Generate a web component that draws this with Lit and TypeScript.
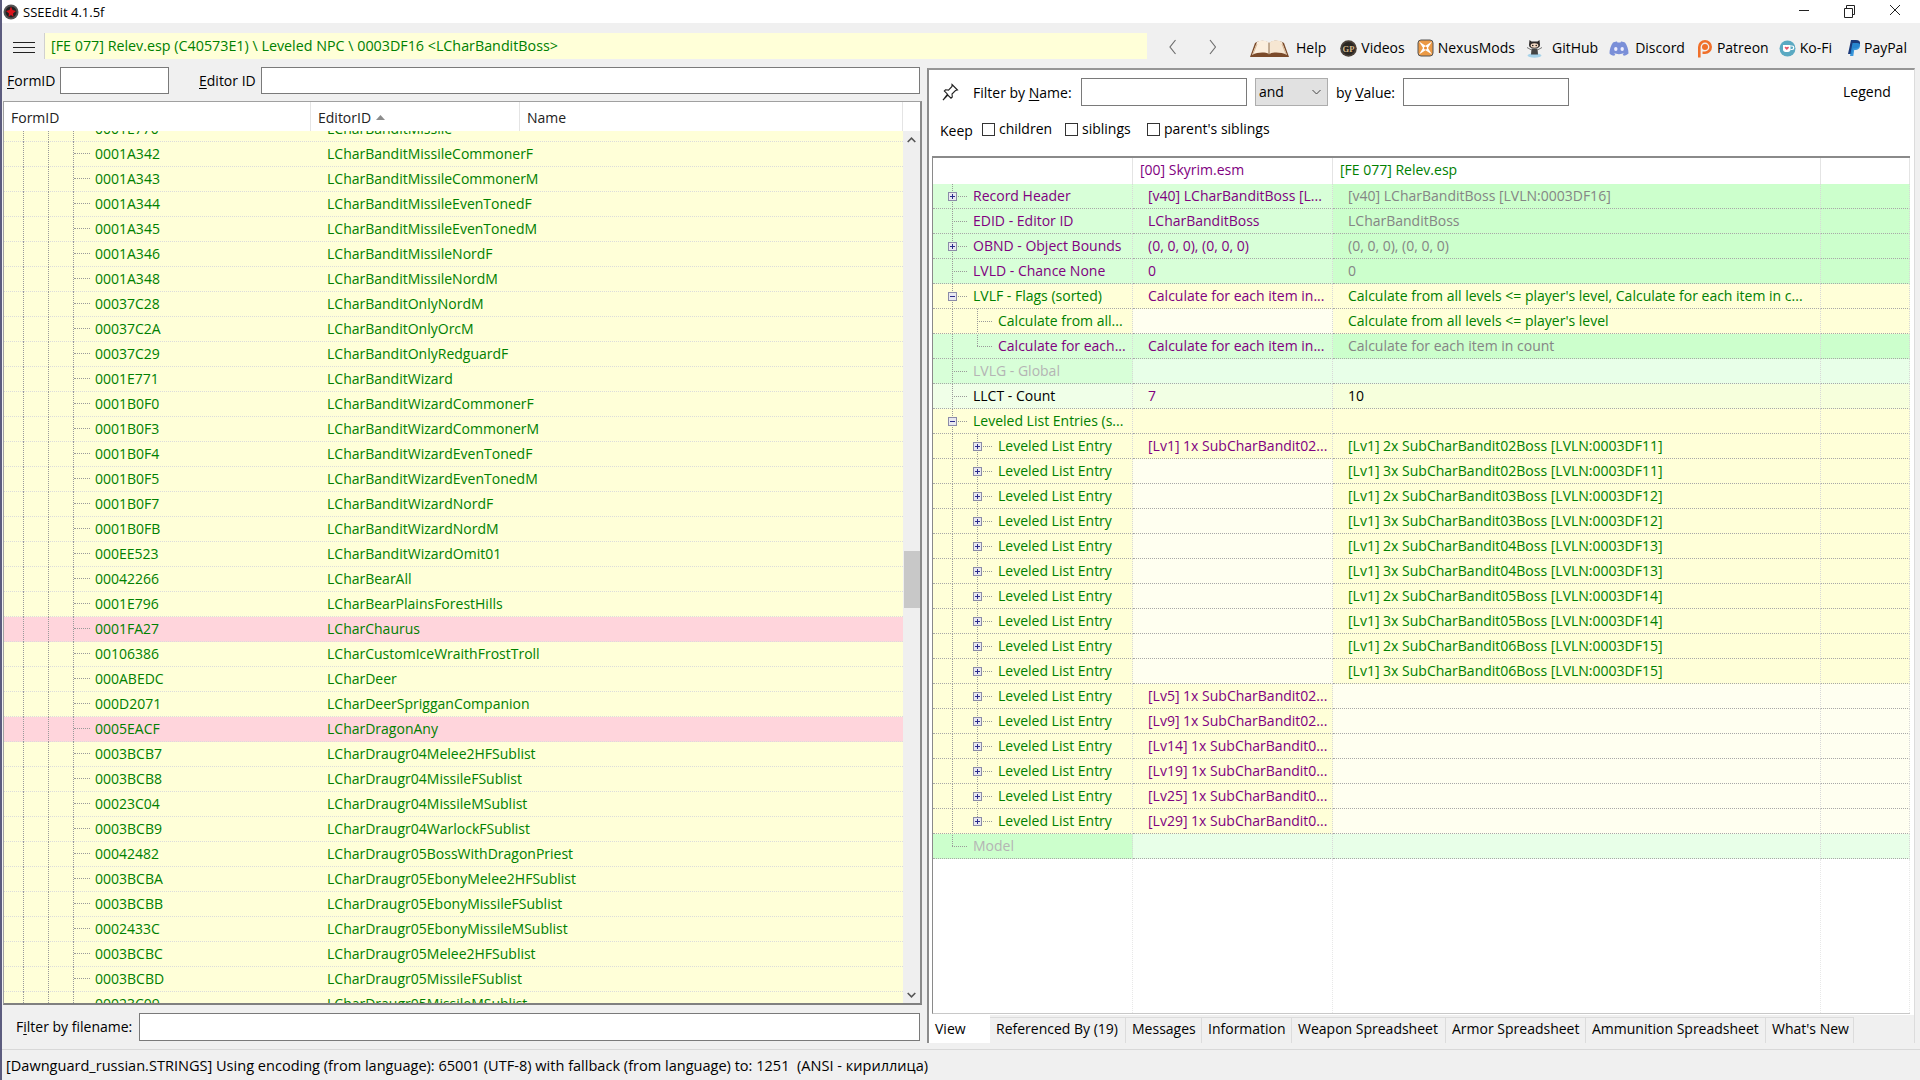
import { LitElement, html, css, svg } from "lit";
import { customElement } from "lit/decorators.js";

const LEFT: [string, string, boolean?][] = [
  ["0001E770", "LCharBanditMissile"],
  ["0001A342", "LCharBanditMissileCommonerF"],
  ["0001A343", "LCharBanditMissileCommonerM"],
  ["0001A344", "LCharBanditMissileEvenTonedF"],
  ["0001A345", "LCharBanditMissileEvenTonedM"],
  ["0001A346", "LCharBanditMissileNordF"],
  ["0001A348", "LCharBanditMissileNordM"],
  ["00037C28", "LCharBanditOnlyNordM"],
  ["00037C2A", "LCharBanditOnlyOrcM"],
  ["00037C29", "LCharBanditOnlyRedguardF"],
  ["0001E771", "LCharBanditWizard"],
  ["0001B0F0", "LCharBanditWizardCommonerF"],
  ["0001B0F3", "LCharBanditWizardCommonerM"],
  ["0001B0F4", "LCharBanditWizardEvenTonedF"],
  ["0001B0F5", "LCharBanditWizardEvenTonedM"],
  ["0001B0F7", "LCharBanditWizardNordF"],
  ["0001B0FB", "LCharBanditWizardNordM"],
  ["000EE523", "LCharBanditWizardOmit01"],
  ["00042266", "LCharBearAll"],
  ["0001E796", "LCharBearPlainsForestHills"],
  ["0001FA27", "LCharChaurus", true],
  ["00106386", "LCharCustomIceWraithFrostTroll"],
  ["000ABEDC", "LCharDeer"],
  ["000D2071", "LCharDeerSprigganCompanion"],
  ["0005EACF", "LCharDragonAny", true],
  ["0003BCB7", "LCharDraugr04Melee2HFSublist"],
  ["0003BCB8", "LCharDraugr04MissileFSublist"],
  ["00023C04", "LCharDraugr04MissileMSublist"],
  ["0003BCB9", "LCharDraugr04WarlockFSublist"],
  ["00042482", "LCharDraugr05BossWithDragonPriest"],
  ["0003BCBA", "LCharDraugr05EbonyMelee2HFSublist"],
  ["0003BCBB", "LCharDraugr05EbonyMissileFSublist"],
  ["0002433C", "LCharDraugr05EbonyMissileMSublist"],
  ["0003BCBC", "LCharDraugr05Melee2HFSublist"],
  ["0003BCBD", "LCharDraugr05MissileFSublist"],
  ["00023C09", "LCharDraugr05MissileMSublist"],
];

type Row = {
  name: string; level: number; exp?: "+" | "-"; nc: string; nb: string;
  v1?: string; c1?: string; b1: string; v2?: string; c2?: string; b2: string;
  lastChild?: boolean; lastTop?: boolean;
};

const P = "#800080", G = "#008000", GY = "#858585", LG = "#b4b4b4", K = "#000";
const GR = "#d8ffd8", GR2 = "#ccffcc", GL = "#e8ffe8", Y = "#ffffd8", YL = "#fffff0";

const entries: Row[] = [
  ["[Lv1] 1x SubCharBandit02...", "[Lv1] 2x SubCharBandit02Boss [LVLN:0003DF11]"],
  ["", "[Lv1] 3x SubCharBandit02Boss [LVLN:0003DF11]"],
  ["", "[Lv1] 2x SubCharBandit03Boss [LVLN:0003DF12]"],
  ["", "[Lv1] 3x SubCharBandit03Boss [LVLN:0003DF12]"],
  ["", "[Lv1] 2x SubCharBandit04Boss [LVLN:0003DF13]"],
  ["", "[Lv1] 3x SubCharBandit04Boss [LVLN:0003DF13]"],
  ["", "[Lv1] 2x SubCharBandit05Boss [LVLN:0003DF14]"],
  ["", "[Lv1] 3x SubCharBandit05Boss [LVLN:0003DF14]"],
  ["", "[Lv1] 2x SubCharBandit06Boss [LVLN:0003DF15]"],
  ["", "[Lv1] 3x SubCharBandit06Boss [LVLN:0003DF15]"],
  ["[Lv5] 1x SubCharBandit02...", ""],
  ["[Lv9] 1x SubCharBandit02...", ""],
  ["[Lv14] 1x SubCharBandit0...", ""],
  ["[Lv19] 1x SubCharBandit0...", ""],
  ["[Lv25] 1x SubCharBandit0...", ""],
  ["[Lv29] 1x SubCharBandit0...", ""],
].map(([a, b], i, all) => ({
  name: "Leveled List Entry", level: 1, exp: "+" as const, nc: G, nb: Y,
  v1: a, c1: P, b1: a ? Y : YL, v2: b, c2: G, b2: b ? Y : YL, lastChild: i === all.length - 1,
}));

const ROWS: Row[] = [
  { name: "Record Header", level: 0, exp: "+", nc: P, nb: GR, v1: "[v40] LCharBanditBoss [L...", c1: P, b1: GR, v2: "[v40] LCharBanditBoss [LVLN:0003DF16]", c2: GY, b2: GR2 },
  { name: "EDID - Editor ID", level: 0, nc: P, nb: GR, v1: "LCharBanditBoss", c1: P, b1: GR, v2: "LCharBanditBoss", c2: GY, b2: GR2 },
  { name: "OBND - Object Bounds", level: 0, exp: "+", nc: P, nb: GR, v1: "(0, 0, 0), (0, 0, 0)", c1: P, b1: GR, v2: "(0, 0, 0), (0, 0, 0)", c2: GY, b2: GR2 },
  { name: "LVLD - Chance None", level: 0, nc: P, nb: GR, v1: "0", c1: P, b1: GR, v2: "0", c2: GY, b2: GR2 },
  { name: "LVLF - Flags (sorted)", level: 0, exp: "-", nc: G, nb: Y, v1: "Calculate for each item in...", c1: P, b1: Y, v2: "Calculate from all levels <= player's level, Calculate for each item in c...", c2: G, b2: Y },
  { name: "Calculate from all...", level: 1, nc: G, nb: Y, v1: "", b1: YL, v2: "Calculate from all levels <= player's level", c2: G, b2: Y },
  { name: "Calculate for each...", level: 1, lastChild: true, nc: P, nb: GR, v1: "Calculate for each item in...", c1: P, b1: GR, v2: "Calculate for each item in count", c2: GY, b2: GR2 },
  { name: "LVLG - Global", level: 0, nc: LG, nb: GR, v1: "", b1: GL, v2: "", b2: GL },
  { name: "LLCT - Count", level: 0, nc: K, nb: "#f0ffe8", v1: "7", c1: P, b1: "#f2ffe4", v2: "10", c2: K, b2: "#f6ffdc" },
  { name: "Leveled List Entries (s...", level: 0, exp: "-", nc: G, nb: Y, v1: "", b1: Y, v2: "", b2: Y },
  ...entries,
  { name: "Model", level: 0, lastTop: true, nc: LG, nb: GR2, v1: "", b1: GL, v2: "", b2: GL },
];

@customElement("app-root")
export class AppRoot extends LitElement {
  static styles = css`
    :host { display: block; width: 1920px; height: 1080px; overflow: hidden; background: #f0f0f0; border-left: 2px solid #5c5c7e; box-sizing: border-box;
      font: 14px/18px "Open Sans", "Noto Sans", sans-serif; color: #000; }
    u { text-underline-offset: 2px; }
    .title { height: 23px; background: #fff; display: flex; align-items: center; font-size: 13px; }
    .title .app { margin: 0 4px 0 1px; display: flex; }
    .title .grow { flex: 1; }
    .wc { display: flex; align-items: center; }
    .wc svg { display: block; }
    .toolbar { height: 44px; display: flex; align-items: center; padding-top: 2px; box-sizing: border-box; }
    .burger { width: 22px; height: 11px; margin: 2px 9px 0 11px; border-top: 1px solid #222; border-bottom: 1px solid #222; display: flex; align-items: center; box-sizing: border-box; flex: none; }
    .burger i { display: block; height: 1px; width: 100%; background: #222; }
    .crumb { width: 1103px; height: 26px; box-sizing: border-box; background: #ffffd8; color: #008000; padding: 4px 6px; border-left: 1px solid #d0d0d0; white-space: nowrap; margin-right: 22px; font-size: 14.3px; flex: none; }
    .nav { width: 47px; display: flex; flex: none; margin-top: 1px; }
    .tools { display: flex; align-items: center; margin-top: 4px; }
    .tool { display: flex; align-items: center; white-space: nowrap; }
    .tool svg { display: block; flex: none; }
    .main { display: flex; height: 982px; }
    .left { width: 920px; margin-left: 1px; display: flex; flex-direction: column; }
    .fbar { height: 27px; display: flex; align-items: center; margin-bottom: 7px; }
    input { box-sizing: border-box; border: 1px solid #7a7a7a; background: #fff; display: block; height: 100%; margin: 0; padding: 0; outline: none; }
    .fbar .l1 { width: 57px; padding-left: 4px; box-sizing: border-box; }
    .fbar .i1 { width: 109px; height: 27px; }
    .fbar .l2 { margin-left: 30px; width: 62px; white-space: nowrap; }
    .fbar .i2 { width: 659px; height: 27px; }
    .list { height: 904px; border: 1px solid #8e8e8e; border-width: 1px 2px 2px 1px; border-color: #a0a0a0 #8a8a8a #808080 #a0a0a0; box-sizing: border-box; background: #fff; display: flex; flex-direction: column; width: 919px; }
    .lhead { height: 29px; display: flex; flex: none; color: #222; }
    .lhead div { box-sizing: border-box; border-right: 1px solid #e4e4e4; padding: 7px 0 0 7px; }
    .lbody { flex: 1; display: flex; min-height: 0; }
    .lrows { flex: 1; overflow: hidden; }
    .lscroll { margin-top: -14px; }
    .lrow { height: 25px; box-sizing: border-box; display: flex; background: #ffffd8; color: #008000; border-bottom: 1px dotted #dcdcdc; white-space: nowrap; }
    .lrow.pink { background: #ffd5dc; color: #008000; }
    .lrow .id { width: 307px; display: flex; padding-left: 19px; box-sizing: border-box; }
    .lrow .id i { display: block; width: 25px; box-sizing: border-box; border-left: 1px dotted #9a9a9a; height: 25px; }
    .lrow .id i.h { width: 22px; position: relative; }
    .lrow .id i.h::after { content: ""; position: absolute; left: 0; top: 11px; width: 16px; border-top: 1px dotted #9a9a9a; }
    .lrow .txt { line-height: 24px; }
    .lrow .ed { padding-left: 16px; line-height: 24px; }
    .sb { width: 17px; flex: none; background: #efefef; display: flex; flex-direction: column; align-items: center; }
    .sb .arrow { height: 17px; flex: none; display: flex; align-items: center; justify-content: center; }
    .sb .gap { height: 403px; flex: none; }
    .sb .thumb { height: 57px; width: 16px; background: #c8c8c8; flex: none; }
    .sb .grow { flex: 1; }
    .fname { height: 28px; margin-top: 8px; display: flex; align-items: center; padding-left: 13px; }
    .fname span { width: 123px; flex: none; white-space: nowrap; }
    .fname input { width: 781px; height: 28px; }
    .right { width: 988px; margin: 1px 0 0 4px; border-top: 2px solid #969696; border-left: 2px solid #8c8c8c; background: #fff; height: 975px; box-sizing: border-box; display: flex; flex-direction: column; border-right: 1px solid #dcdcdc; }
    .rf { height: 35px; display: flex; align-items: center; flex: none; margin-top: 4px; }
    .rf svg { margin-left: 12px; }
    .rf .name { margin-left: 14px; width: 108px; white-space: nowrap; padding-top: 2px; }
    .rf input { width: 166px; height: 28px; }
    .select { width: 73px; height: 28px; box-sizing: border-box; margin: 0 8px 0 8px; background: #e1e1e1; border: 1px solid #adadad; display: flex; align-items: center; justify-content: space-between; padding: 0 6px 0 3px; }
    .select svg { margin: 0; }
    .rf .val { width: 67px; white-space: nowrap; padding-top: 2px; }
    .rf .legend { margin-left: 274px; }
    .keep { height: 46px; flex: none; display: flex; align-items: center; padding: 0 0 6px 11px; box-sizing: border-box; margin-top: 1px; }
    .keep .k { width: 42px; padding-top: 2px; }
    .keep .c { display: flex; align-items: center; margin-top: -2px; white-space: nowrap; }
    .cb { width: 13px; height: 13px; border: 1px solid #333; box-sizing: border-box; background: #fff; margin-right: 4px; }
    .tree { margin-left: 3px; width: 978px; flex: 1; min-height: 0; border-top: 2px solid #8a8a8a; border-left: 1px solid #8a8a8a; border-bottom: 1px solid #c8c8c8; display: flex; flex-direction: column; box-sizing: border-box; }
    .thead, .trow, .tfill { display: grid; grid-template-columns: 200px 200px 488px 1fr; flex: none; }
    .thead { height: 26px; }
    .thead div { border-right: 1px solid #e4e4e4; padding: 3px 0 0 7px; white-space: nowrap; }
    .trow { height: 25px; }
    .cell { box-sizing: border-box; height: 25px; border-bottom: 1px dotted #a8a8a8; border-right: 1px dotted #d8d8d8; white-space: nowrap; overflow: hidden; line-height: 24px; padding-left: 15px; }
    .cell.n { display: flex; padding-left: 0; }
    .slot { display: block; flex: none; position: relative; height: 25px; }
    .slot.i0 { width: 25px; }
    .slot.i1 { width: 40px; }
    .vl { position: absolute; left: 19px; top: -1px; height: 26px; border-left: 1px dotted #9a9a9a; }
    .vl.half { height: 13px; }
    .hl { position: absolute; left: 19px; top: 12px; width: 15px; border-top: 1px dotted #9a9a9a; }
    .box { position: absolute; left: 15px; top: 8px; width: 9px; height: 9px; box-sizing: border-box; border: 1px solid #8b8ba8; background: #e9e9f0; display: flex; align-items: center; justify-content: center; }
    .box svg { display: block; }
    .tfill { flex: 1; min-height: 0; }
    .tfill div { border-right: 1px dotted #e8e8e8; }
    .tabs { height: 28px; flex: none; display: flex; background: #f0f0f0; margin-top: 1px; }
    .tab { box-sizing: border-box; height: 26px; margin-top: 2px; padding: 2px 0 0 6px; border-top: 1px solid #dcdcdc; border-right: 1px solid #dcdcdc; white-space: nowrap; }
    .tab.on { background: #fff; height: 28px; margin-top: 0; border: 0; padding: 5px 0 0 6px; }
    .status { height: 31px; border-top: 1px solid #d8d8d8; box-sizing: border-box; padding: 6px 0 0 4px; white-space: nowrap; font-size: 14.55px; }
  `;

  private tool(icon: unknown, label: string, ml: number, gap: number) {
    return html`<div class="tool" style="margin-left:${ml}px"><span style="display:flex;margin-right:${gap}px">${icon}</span>${label}</div>`;
  }

  private box(sign: string) {
    return html`<span class="box"><svg width="7" height="7" viewBox="0 0 7 7"><path d="M1 3.500h5${sign === "+" ? "M3.500 1v5" : ""}" stroke="#2b2b8c" stroke-width="1" fill="none"/></svg></span>`;
  }

  private nameCell(r: Row) {
    return html`<div class="cell n" style="background:${r.nb};color:${r.nc}">
      ${r.level === 1 ? html`<span class="slot i0"><span class="vl"></span></span>` : ""}
      <span class="slot i1">
        <span class="vl ${r.lastTop || r.lastChild ? "half" : ""}"></span><span class="hl"></span>
        ${r.exp ? this.box(r.exp) : ""}
      </span>
      <span>${r.name}</span>
    </div>`;
  }

  render() {
    const icons = {
      book: svg`<svg width="41" height="20" viewBox="0 0 41 20"><path d="M1 19 6 5c5-3 10-3 14 0 4-3 10-3 15 0l5 14z" fill="#7a4a2a"/><path d="M3 17 8 4c4-2 9-2 12 1v11c-4-2-11-2-17 1z" fill="#fbeedd"/><path d="M38 17 33 4c-4-2-10-2-13 1v11c4-2 12-2 18 1z" fill="#f6e6d2"/><path d="M20 5v12" stroke="#8a6a4a"/><path d="M8 6 4 16M33 6l4 10" stroke="#d8b898" fill="none"/></svg>`,
      gp: svg`<svg width="17" height="17" viewBox="0 0 17 17"><circle cx="8.500" cy="8.500" r="8.300" fill="#4a4038"/><circle cx="8.500" cy="8.500" r="6.500" fill="#2a2622"/><text x="8.500" y="11.500" font-size="8.500" font-family="Liberation Serif,serif" font-weight="700" fill="#d4b98a" text-anchor="middle">GP</text></svg>`,
      nexus: svg`<svg width="17" height="18" viewBox="0 0 17 18"><rect x="1" y="1" width="15" height="16" rx="3" fill="#ec9a45" stroke="#555" stroke-width="1"/><path d="M2 2.500 8.500 6.800 15 2.500 11 9 15 15.500 8.500 11.200 2 15.500 6 9z" fill="#fff"/><circle cx="8.500" cy="9" r="1.500" fill="#e9882c"/></svg>`,
      github: svg`<svg width="17" height="20" viewBox="0 0 17 20"><ellipse cx="8.500" cy="17.500" rx="7" ry="2.200" fill="#a7d3ea"/><path d="M3.500 2 5.500 3.500h6L13.500 2 14 7c0 2-2 3.500-5.500 3.500S3 9 3 7z" fill="#2e2a2a"/><ellipse cx="8.500" cy="7.500" rx="3.800" ry="2.200" fill="#f3d9c4"/><circle cx="6.800" cy="7.500" r=".7"/><circle cx="10.200" cy="7.500" r=".7"/><path d="M5.500 10.500h6l.5 6H5z" fill="#444"/><path d="M1 9.500 5.500 12M16 9.500 11.500 12" stroke="#777"/></svg>`,
      discord: svg`<svg width="20" height="15" viewBox="0 0 20 15"><path d="M4 1.500C6 .6 7.500.4 8 .4l.5 1h3l.5-1c.5 0 2 .2 4 1.100 2 2.900 3.600 6.900 3.500 11-1.300 1.100-3 1.900-4.800 2.200l-1-1.700c.8-.3 1.300-.6 1.700-1-3.500 1.500-7.300 1.500-10.800 0 .4.400.9.700 1.700 1l-1 1.700C3.100 14.400 1.300 13.600.5 12.500.400 8.400 2 4.400 4 1.500z" fill="#7a8fd8"/><ellipse cx="6.800" cy="8" rx="1.700" ry="2" fill="#eef"/><ellipse cx="13.200" cy="8" rx="1.700" ry="2" fill="#eef"/></svg>`,
      patreon: svg`<svg width="16" height="19" viewBox="0 0 16 19"><path d="M1 18.500V8a7 7 0 1 1 7 7H5.500v-2.600H8A4.400 4.400 0 1 0 3.600 8v10.500z" fill="#f0702a"/><circle cx="8" cy="8" r="3" fill="#f0702a"/></svg>`,
      kofi: svg`<svg width="17" height="17" viewBox="0 0 17 17"><circle cx="8.500" cy="8.500" r="8" fill="#5aa9c2"/><path d="M4 5h7.500v4.500c0 1.500-1 2.500-2.500 2.500H6.500C5 12 4 11 4 9.500z" fill="#fff"/><path d="M11.500 6h1.500a1.500 1.500 0 0 1 0 3.500h-1.500" fill="none" stroke="#fff" stroke-width="1.200"/><path d="M7.800 10 5.800 8c-.6-1 .9-2 2-.8 1.100-1.200 2.600-.2 2 .8z" fill="#e5566a"/></svg>`,
      paypal: svg`<svg width="14" height="18" viewBox="0 0 14 18"><path d="M4 1h5c3 0 4.500 1.500 4 4-.5 3-2.500 4.500-5.500 4.500H6L5 15H1z" fill="#1b3a7a"/><path d="M5.500 4h4.500c2.500 0 3.500 1.200 3 3.300-.5 2.500-2.300 3.700-4.500 3.700H7.200L6.300 17H3z" fill="#2a8fd8" opacity=".9"/></svg>`,
    };
    const filler = ["", "", "", ""];
    return html`
      <div class="title">
        <span class="app"><svg width="16" height="16" viewBox="0 0 16 16"><circle cx="8" cy="8" r="7.500" fill="#555"/><circle cx="8" cy="8" r="5.500" fill="#222"/><path d="M8 2.500 9.500 6 13 7 10 9.500 10.500 13 8 11 5.500 13 6 9.500 3 7 6.500 6z" fill="#d8141c"/></svg></span>
        <span>SSEEdit 4.1.5f</span><span class="grow"></span>
        <div class="wc">
          <svg width="114" height="23" viewBox="0 0 114 23">
            <path d="M0 10.500H10" stroke="#222" fill="none"/>
            <path d="M45.500 8.500h8v9h-8zM47.500 8.500v-3h8v9h-2" stroke="#222" fill="none"/>
            <path d="M91 5 101 15M101 5 91 15" stroke="#222" fill="none"/>
          </svg><span style="width:7px"></span>
        </div>
      </div>
      <div class="toolbar">
        <div class="burger"><i></i></div>
        <div class="crumb">[FE 077] Relev.esp (C40573E1) \\ Leveled NPC \\ 0003DF16 &lt;LCharBanditBoss&gt;</div>
        <div class="nav">
          <svg width="47" height="18" viewBox="0 0 47 18"><path d="M6.500 2 1 9l5.500 7M41 2l5.500 7-5.500 7" stroke="#6e6e6e" stroke-width="1.200" fill="none"/></svg>
        </div>
        <div class="tools">
          ${this.tool(icons.book, "Help", 33, 6)}
          ${this.tool(icons.gp, "Videos", 14, 4)}
          ${this.tool(icons.nexus, "NexusMods", 12, 4)}
          ${this.tool(icons.github, "GitHub", 11, 9)}
          ${this.tool(icons.discord, "Discord", 11, 6)}
          ${this.tool(icons.patreon, "Patreon", 12, 4)}
          ${this.tool(icons.kofi, "Ko-Fi", 10, 4)}
          ${this.tool(icons.paypal, "PayPal", 15, 3)}
        </div>
      </div>
      <div class="main">
        <div class="left">
          <div class="fbar">
            <span class="l1"><u>F</u>ormID</span><input class="i1" />
            <span class="l2"><u>E</u>ditor ID</span><input class="i2" />
          </div>
          <div class="list">
            <div class="lhead">
              <div style="width:307px">FormID</div>
              <div style="width:209px;padding-left:7px;display:flex">EditorID<svg style="margin:6px 0 0 5px" width="9" height="5" viewBox="0 0 9 5"><path d="M4.500 0 9 5H0z" fill="#8c8c8c"/></svg></div>
              <div style="width:383px;padding-left:7px">Name</div>
            </div>
            <div class="lbody">
              <div class="lrows"><div class="lscroll">
                ${LEFT.map(([id, ed, pink]) => html`<div class="lrow ${pink ? "pink" : ""}">
                  <div class="id"><i></i><i></i><i class="h"></i><span class="txt">${id}</span></div>
                  <div class="ed">${ed}</div>
                </div>`)}
              </div></div>
              <div class="sb">
                <div class="arrow"><svg width="9" height="6" viewBox="0 0 9 6"><path d="M.7 5 4.500 1.200 8.300 5" stroke="#555" stroke-width="1.600" fill="none"/></svg></div>
                <div class="gap"></div><div class="thumb"></div><div class="grow"></div>
                <div class="arrow"><svg width="9" height="6" viewBox="0 0 9 6"><path d="M.7 1 4.500 4.800 8.300 1" stroke="#555" stroke-width="1.600" fill="none"/></svg></div>
              </div>
            </div>
          </div>
          <div class="fname"><span>F<u>i</u>lter by filename:</span><input /></div>
        </div>
        <div class="right">
          <div class="rf">
            <svg width="18" height="18" viewBox="0 0 18 18"><path d="M11 1.500 16.500 7l-2 .5-3.500 3.500.3 3-1.300 1.200-3.200-3.200L2 17l4.500-5.800L3.300 8 4.500 6.800l3 .3L11 3.500z" fill="#fff" stroke="#222" stroke-width="1.100"/></svg>
            <span class="name">Filter by <u>N</u>ame:</span><input />
            <div class="select"><span>and</span><svg width="9" height="6" viewBox="0 0 9 6"><path d="M.5 1 4.500 5 8.500 1" stroke="#444" fill="none"/></svg></div>
            <span class="val">by <u>V</u>alue:</span><input />
            <span class="legend">Legend</span>
          </div>
          <div class="keep">
            <span class="k">Keep</span>
            <span class="c" style="width:83px"><span class="cb"></span>children</span>
            <span class="c" style="width:82px"><span class="cb"></span>siblings</span>
            <span class="c"><span class="cb"></span>parent's siblings</span>
          </div>
          <div class="tree">
            <div class="thead">
              <div></div>
              <div style="color:#800080">[00] Skyrim.esm</div>
              <div style="color:#008000">[FE 077] Relev.esp</div>
              <div></div>
            </div>
            ${ROWS.map((r) => html`<div class="trow">
              ${this.nameCell(r)}
              <div class="cell" style="background:${r.b1};color:${r.c1 ?? K}">${r.v1}</div>
              <div class="cell" style="background:${r.b2};color:${r.c2 ?? K}">${r.v2}</div>
              <div class="cell" style="background:${r.b2}"></div>
            </div>`)}
            <div class="tfill">${filler.map(() => html`<div></div>`)}</div>
          </div>
          <div class="tabs">
            <div class="tab on" style="width:61px">View</div>
            <div class="tab" style="width:136px">Referenced By (19)</div>
            <div class="tab" style="width:76px">Messages</div>
            <div class="tab" style="width:90px">Information</div>
            <div class="tab" style="width:154px">Weapon Spreadsheet</div>
            <div class="tab" style="width:140px">Armor Spreadsheet</div>
            <div class="tab" style="width:180px">Ammunition Spreadsheet</div>
            <div class="tab" style="width:88px">What's New</div>
          </div>
        </div>
      </div>
      <div class="status">[Dawnguard_russian.STRINGS] Using encoding (from language): 65001 (UTF-8) with fallback (from language) to: 1251&nbsp; (ANSI - кириллица)</div>
    `;
  }
}
